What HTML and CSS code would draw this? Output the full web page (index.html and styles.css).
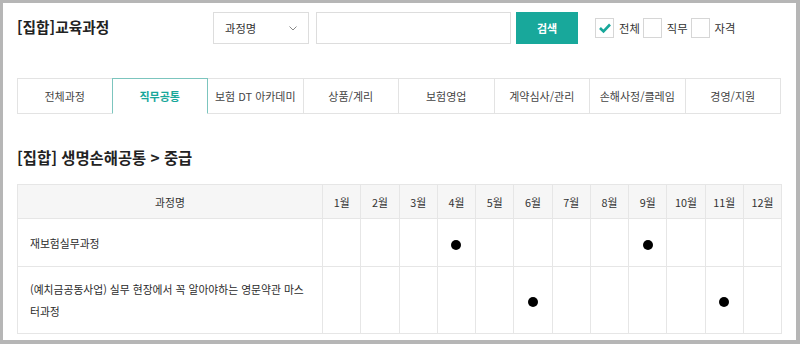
FILE: index.html
```html
<!DOCTYPE html>
<html lang="ko">
<head>
<meta charset="utf-8">
<title>[집합]교육과정</title>
<link rel="stylesheet" href="styles.css">
</head>
<body>
<div class="frame">
  <div class="topbar">
    <h1 class="page-title">[집합]교육과정</h1>
    <div class="select">
      <span>과정명</span>
      <svg class="chev" width="8" height="5" viewBox="0 0 8 5"><polyline points="0.5,0.5 4,4 7.5,0.5" fill="none" stroke="#888" stroke-width="1"/></svg>
    </div>
    <div class="search-input"></div>
    <button class="search-btn">검색</button>
    <div class="checks">
      <span class="cbox checked"><svg width="14" height="12" viewBox="0 0 14 12"><polyline points="2,6 5.5,9.5 12,2.5" fill="none" stroke="#17a79a" stroke-width="2.6"/></svg></span>
      <span class="clabel">전체</span>
      <span class="cbox"></span>
      <span class="clabel">직무</span>
      <span class="cbox"></span>
      <span class="clabel">자격</span>
    </div>
  </div>

  <div class="tabs">
    <div class="tab">전체과정</div>
    <div class="tab active">직무공통</div>
    <div class="tab">보험 DT 아카데미</div>
    <div class="tab">상품/계리</div>
    <div class="tab">보험영업</div>
    <div class="tab">계약심사/관리</div>
    <div class="tab">손해사정/클레임</div>
    <div class="tab">경영/지원</div>
  </div>

  <h2 class="section-title">[집합] 생명손해공통 &gt; 중급</h2>

  <table class="sched">
    <colgroup>
      <col class="c-name">
      <col><col><col><col><col><col><col><col><col><col><col><col>
    </colgroup>
    <thead>
      <tr>
        <th>과정명</th>
        <th>1월</th><th>2월</th><th>3월</th><th>4월</th><th>5월</th><th>6월</th>
        <th>7월</th><th>8월</th><th>9월</th><th>10월</th><th>11월</th><th>12월</th>
      </tr>
    </thead>
    <tbody>
      <tr class="r1">
        <td class="name">재보험실무과정</td>
        <td></td><td></td><td></td><td><span class="dot"></span></td><td></td><td></td>
        <td></td><td></td><td><span class="dot"></span></td><td></td><td></td><td></td>
      </tr>
      <tr class="r2">
        <td class="name">(예치금공동사업) 실무 현장에서 꼭 알아야하는 영문약관 마스터과정</td>
        <td></td><td></td><td></td><td></td><td></td><td><span class="dot"></span></td>
        <td></td><td></td><td></td><td></td><td><span class="dot"></span></td><td></td>
      </tr>
    </tbody>
  </table>
</div>
</body>
</html>
```

FILE: styles.css
```css
* { box-sizing: border-box; }
html, body { margin: 0; padding: 0; background: #fff; }
body {
  font-family: "Noto Sans", "Noto Sans CJK KR", sans-serif;
  color: #333;
}
.frame {
  width: 800px;
  height: 344px;
  border-style: solid;
  border-color: #b6b6b6;
  border-width: 3px 4px 4px 3px;
  padding: 9px 15px 0 14px;
  background: #fff;
  overflow: hidden;
}
.topbar {
  display: flex;
  align-items: center;
  height: 32px;
}
.page-title {
  flex: none;
  width: 196px;
  margin: 0;
  font-family: "Noto Sans CJK KR", sans-serif;
  font-size: 14.7px;
  font-weight: 700;
  color: #222;
  line-height: 20px;
  position: relative;
  top: -1px;
}
.select {
  flex: none;
  width: 96px;
  height: 32px;
  border: 1px solid #ddd;
  display: flex;
  align-items: center;
  justify-content: space-between;
  padding: 0 11px 0 11px;
  font-family: "Noto Sans CJK KR", sans-serif;
  font-size: 11.3px;
  color: #333;
}
.chev { margin-top: 1px; }
.search-input {
  flex: none;
  width: 195px;
  height: 32px;
  margin-left: 7px;
  border: 1px solid #ddd;
}
.search-btn {
  flex: none;
  width: 62px;
  height: 32px;
  margin-left: 5px;
  border: none;
  background: #18a89b;
  color: #fff;
  font-family: "Noto Sans CJK KR", sans-serif;
  font-size: 11px;
  font-weight: 700;
  padding: 0;
}
.checks {
  display: flex;
  align-items: center;
  margin-left: 17px;
}
.cbox {
  width: 19px;
  height: 20px;
  border: 1px solid #d6d6d6;
  background: #fff;
  display: flex;
  align-items: center;
  justify-content: center;
}
.clabel {
  font-family: "Noto Sans CJK KR", sans-serif;
  font-size: 11.3px;
  color: #333;
  margin: 0 3px 0 5px;
}
.tabs {
  display: grid;
  grid-template-columns: repeat(8, 1fr);
  margin-top: 34px;
  height: 35px;
}
.tab {
  border: 1px solid #e3e3e3;
  margin-left: -1px;
  display: flex;
  align-items: center;
  justify-content: center;
  font-family: "Noto Sans CJK KR", sans-serif;
  font-size: 11px;
  color: #444;
  white-space: nowrap;
  background: #fff;
}
.tab:first-child { margin-left: 0; }
.tab.active {
  position: relative;
  z-index: 1;
  border-color: #7cc5be;
  border-bottom-color: #fff;
  color: #17a79a;
  font-weight: 700;
  height: 36px;
}
.section-title {
  margin: 34px 0 0;
  font-family: "Noto Sans CJK KR", sans-serif;
  font-size: 15.4px;
  font-weight: 700;
  color: #222;
  line-height: 20px;
}
.sched {
  margin-top: 17px;
  width: 765px;
  border-collapse: collapse;
  table-layout: fixed;
  font-family: "Noto Sans CJK KR", sans-serif;
  font-size: 10.8px;
  color: #2b2b2b;
}
.c-name { width: 305px; }
.sched th, .sched td {
  border: 1px solid #e6e6e6;
  text-align: center;
  padding: 0;
}
.sched th {
  background: #f6f6f6;
  font-weight: 400;
  height: 34px;
  color: #333;
}
.r1 td { height: 48px; }
.r2 td { height: 67px; }
.sched td.name {
  text-align: left;
  padding: 0 12px 0 12px;
  line-height: 22px;
  word-break: break-all;
}
.dot {
  display: inline-block;
  width: 10px;
  height: 10px;
  border-radius: 50%;
  background: #000;
  vertical-align: middle;
}
```
